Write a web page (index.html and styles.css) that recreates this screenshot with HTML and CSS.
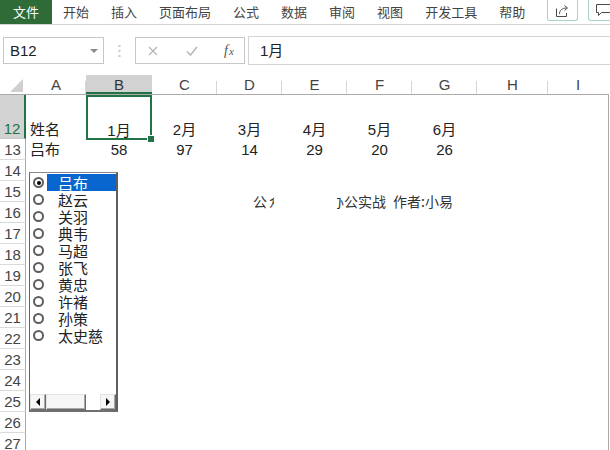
FILE: index.html
```html
<!DOCTYPE html>
<html>
<head>
<meta charset="utf-8">
<link rel="stylesheet" href="styles.css">
</head>
<body>
<div class="app">
  <div class="ribbon">
    <div class="tab file">文件</div>
    <div class="tab">开始</div>
    <div class="tab">插入</div>
    <div class="tab">页面布局</div>
    <div class="tab">公式</div>
    <div class="tab">数据</div>
    <div class="tab">审阅</div>
    <div class="tab">视图</div>
    <div class="tab">开发工具</div>
    <div class="tab">帮助</div>
    <div class="rbtns">
      <div class="rbtn">
        <svg width="14" height="13" viewBox="0 0 14 13"><path d="M0.5 4.5v8h10v-3.5" fill="none" stroke="#4a4a4a"/><path d="M3.5 10c0-3.5 2.5-6 7-6" fill="none" stroke="#4a4a4a"/><path d="M8.5 1.5l3 2.5-3 2.5" fill="none" stroke="#4a4a4a"/></svg>
      </div>
      <div class="rbtn">
        <svg width="16" height="13" viewBox="0 0 16 13"><path d="M0.5 0.5h15v8h-10l-3 3v-3h-2z" fill="none" stroke="#4a4a4a"/></svg>
      </div>
    </div>
  </div>

  <div class="fbar">
    <div class="namebox"><span class="nb-text">B12</span><span class="dd"></span></div>
    <div class="dots"><svg width="3" height="12" viewBox="0 0 3 12"><rect x="0.5" y="0" width="2" height="2" fill="#c8c8c8"/><rect x="0.5" y="5" width="2" height="2" fill="#c8c8c8"/><rect x="0.5" y="10" width="2" height="2" fill="#c8c8c8"/></svg></div>
    <div class="fxbox">
      <span class="fxi"><svg width="10" height="10" viewBox="0 0 10 10"><path d="M1 1l8 8M9 1l-8 8" stroke="#b5b5b5" stroke-width="1.2" fill="none"/></svg></span>
      <span class="fxi"><svg width="12" height="10" viewBox="0 0 12 10"><path d="M1 5.5l3.5 3.5 6.5-8" stroke="#b5b5b5" stroke-width="1.5" fill="none"/></svg></span>
      <span class="fxi fx"><i>f</i><i class="sx">x</i></span>
    </div>
    <div class="finput">1月</div>
  </div>

  <div class="sheet">
    <div class="row hdr">
      <div class="corner"><svg width="26" height="20" viewBox="0 0 26 20"><path d="M23 4v13h-13z" fill="#cfcfcf"/></svg></div>
      <div class="ch">A</div>
      <div class="ch sel">B</div>
      <div class="ch">C</div>
      <div class="ch">D</div>
      <div class="ch">E</div>
      <div class="ch">F</div>
      <div class="ch">G</div>
      <div class="ch">H</div>
      <div class="ch last">I</div>
    </div>

    <div class="row body r12">
      <div class="rh selr">12</div>
      <div class="c left">姓名</div>
      <div class="c active">1月<span class="handle"></span></div>
      <div class="c">2月</div>
      <div class="c">3月</div>
      <div class="c">4月</div>
      <div class="c">5月</div>
      <div class="c">6月</div>
      <div class="c"></div>
      <div class="c"></div>
    </div>

    <div class="row body">
      <div class="rh">13</div>
      <div class="c left">吕布</div>
      <div class="c">58</div>
      <div class="c">97</div>
      <div class="c">14</div>
      <div class="c">29</div>
      <div class="c">20</div>
      <div class="c">26</div>
      <div class="c"></div>
      <div class="c"></div>
    </div>

    <div class="row body"><div class="rh">14</div></div>
    <div class="row body"><div class="rh">15</div></div>
    <div class="row body"><div class="rh">16</div></div>
    <div class="row body"><div class="rh">17</div></div>
    <div class="row body"><div class="rh">18</div></div>
    <div class="row body"><div class="rh">19</div></div>
    <div class="row body"><div class="rh">20</div></div>
    <div class="row body"><div class="rh">21</div></div>
    <div class="row body"><div class="rh">22</div></div>
    <div class="row body"><div class="rh">23</div></div>
    <div class="row body"><div class="rh">24</div></div>
    <div class="row body"><div class="rh">25</div></div>
    <div class="row body"><div class="rh">26</div></div>
    <div class="row body"><div class="rh">27</div></div>

    <div class="listbox">
      <div class="items">
        <div class="item on"><span class="radio"></span><span class="lbl">吕布</span></div>
        <div class="item"><span class="radio"></span><span class="lbl">赵云</span></div>
        <div class="item"><span class="radio"></span><span class="lbl">关羽</span></div>
        <div class="item"><span class="radio"></span><span class="lbl">典韦</span></div>
        <div class="item"><span class="radio"></span><span class="lbl">马超</span></div>
        <div class="item"><span class="radio"></span><span class="lbl">张飞</span></div>
        <div class="item"><span class="radio"></span><span class="lbl">黄忠</span></div>
        <div class="item"><span class="radio"></span><span class="lbl">许褚</span></div>
        <div class="item"><span class="radio"></span><span class="lbl">孙策</span></div>
        <div class="item"><span class="radio"></span><span class="lbl">太史慈</span></div>
      </div>
      <div class="hscroll">
        <div class="sbtn"><span class="tri-l"></span></div>
        <div class="thumb"></div>
        <div class="track"></div>
        <div class="sbtn"><span class="tri-r"></span></div>
      </div>
    </div>

    <div class="note">
      <span>公</span><span class="cut-r">众</span><span class="gap"></span><span class="cut-l"><span>办</span></span><span>公实战</span><span class="sp"></span><span>作者:小易</span>
    </div>
  </div>
</div>
</body>
</html>
```

FILE: styles.css
```css
* { box-sizing: border-box; margin: 0; padding: 0; }
html, body { width: 610px; height: 450px; overflow: hidden; background: #fff; }
body { font-family: "Liberation Sans", "Noto Sans CJK SC", sans-serif; color: #222; }
.app { width: 610px; height: 450px; overflow: hidden; }

/* ribbon */
.ribbon {
  display: flex; height: 25px; border-bottom: 1px solid #d4d4d4;
  font-family: "Noto Sans CJK SC", sans-serif; font-size: 13px; color: #444;
}
.tab { padding: 0 11px; height: 24px; line-height: 23px; white-space: nowrap; }
.tab.file { background: #2e6b37; color: #fff; padding: 0 13px; }
.rbtns { margin-left: auto; margin-right: -9px; display: flex; gap: 10px; }
.rbtn {
  width: 31px; height: 21px; border: 1px solid #a6d3c6; border-top: none;
  border-radius: 0 0 3px 3px; display: flex; align-items: center; justify-content: center;
}

/* formula bar */
.fbar { display: flex; align-items: flex-start; margin-top: 11px; height: 29px; }
.namebox {
  margin-left: 3px; margin-top: 1px; width: 101px; height: 27px;
  border: 1px solid #c6c6c6; display: flex; align-items: center;
  font-size: 15px; color: #222;
}
.nb-text { padding-left: 6px; }
.dd {
  margin-left: auto; margin-right: 5px; width: 0; height: 0;
  border-left: 4px solid transparent; border-right: 4px solid transparent;
  border-top: 4px solid #8a8a8a;
}
.dots { width: 31px; height: 29px; display: flex; align-items: center; justify-content: center; }
.fxbox {
  margin-top: 1px; width: 110px; height: 27px; border: 1px solid #c6c6c6;
  display: flex; align-items: center; padding-left: 12px; gap: 0;
}
.fxi { width: 38px; display: flex; align-items: center; }
.fxi.fx { width: 20px; font-family: "Liberation Serif", serif; font-size: 14px; color: #555; }
.fxi.fx .sx { font-size: 11px; margin-left: 1px; }
.finput {
  flex: 1; margin-left: 3px; height: 29px; border: 1px solid #d4d4d4; border-right: none;
  font-size: 15px; line-height: 27px; padding-left: 11px; color: #222;
}

/* sheet */
.sheet { position: relative; margin-top: 10px; }
.row {
  display: grid;
  grid-template-columns: 26px 60px 66px 65px 65px 65px 65px 65px 71px 60px;
  height: 21px;
}
.row.body { width: 609px; border-right: 1px solid #ababab; }
.row.hdr { height: 20px; border-bottom: 1px solid #ababab; width: 609px; }
.row.r12 { height: 44px; }

.corner { width: 26px; height: 19px; }
.ch {
  font-size: 15px; color: #444; text-align: center; line-height: 19px;
  background: linear-gradient(#d6d6d6, #d6d6d6) right bottom / 1px 13px no-repeat;
}
.ch.sel {
  background: linear-gradient(#217346, #217346) left bottom / 100% 2px no-repeat, #d2d2d2;
  color: #333;
}
.ch.last { background: none; }

.rh {
  grid-column: 1; font-size: 15px; color: #444; text-align: center;
  border-right: 1px solid #ababab; border-bottom: 1px solid #dadada;
  display: flex; align-items: flex-end; justify-content: center; line-height: 17px; padding-bottom: 1px;
  height: 100%;
}
.rh.selr { background: #d2d2d2; color: #217346; border-right: 2px solid #217346; border-bottom-color: #c6c6c6; }

.c {
  font-size: 15px; color: #222; display: flex; align-items: flex-end; justify-content: center;
  line-height: 17px; padding-bottom: 2px; white-space: nowrap;
}
.c.left { justify-content: flex-start; padding-left: 4px; }
.r12 .c { padding-bottom: 1px; }
.c.active { position: relative; box-shadow: inset 0 0 0 2px #217346; margin-bottom: -1px; }
.handle {
  position: absolute; right: -3px; bottom: -3px; width: 6px; height: 6px;
  background: #217346; border: 1px solid #fff; box-sizing: content-box;
}

/* list box control */
.listbox {
  position: absolute; left: 29px; top: 97px; width: 89px; height: 240px;
  background: #fff; border-left: 1px solid #646464; border-top: 1px solid #8a8a8a;
  border-right: 2px solid #5f5f5f; border-bottom: 2px solid #6f6f6f;
  display: flex; flex-direction: column;
  font-family: "Noto Sans CJK SC", sans-serif; font-size: 15px; color: #222;
}
.items { padding-top: 1px; display: flex; flex-direction: column; }
.item { height: 17px; display: flex; align-items: center; padding-left: 3px; }
.radio {
  width: 11px; height: 11px; border: 2px solid #5e5e5e; border-radius: 50%;
  display: flex; align-items: center; justify-content: center; flex: none;
}
.item.on .radio::after { content: ""; width: 4px; height: 4px; border-radius: 50%; background: #000; }
.lbl { margin-left: 3px; padding-left: 11px; flex: 1; line-height: 17px; height: 17px; }
.item.on .lbl { background: #0a66cf; color: #fff; }

.hscroll { margin-top: auto; height: 16px; display: flex; }
.sbtn, .thumb {
  background: #f6f6f6; border-top: 1px solid #e2e2e2; border-left: 1px solid #e2e2e2;
  border-right: 1px solid #6a6a6a; border-bottom: 1px solid #6a6a6a;
  box-shadow: inset -1px -1px 0 #a8a8a8;
}
.sbtn { width: 16px; display: flex; align-items: center; justify-content: center; }
.thumb { width: 40px; }
.track { width: 14px; background: #fff; }
.tri-l { width: 0; height: 0; border-top: 4px solid transparent; border-bottom: 4px solid transparent; border-right: 4px solid #000; }
.tri-r { width: 0; height: 0; border-top: 4px solid transparent; border-bottom: 4px solid transparent; border-left: 4px solid #000; }

/* floating text */
.note {
  position: absolute; left: 253px; top: 118px; display: flex; align-items: center;
  font-family: "Noto Sans CJK SC", sans-serif; font-size: 14px; line-height: 16px; color: #333;
  white-space: nowrap;
}
.cut-r { display: inline-block; width: 5px; overflow: hidden; margin-left: 2px; }
.gap { display: inline-block; width: 63px; }
.cut-l { display: inline-block; width: 7px; overflow: hidden; }
.cut-l span { display: inline-block; margin-left: -7px; }
.sp { display: inline-block; width: 7px; }
```
